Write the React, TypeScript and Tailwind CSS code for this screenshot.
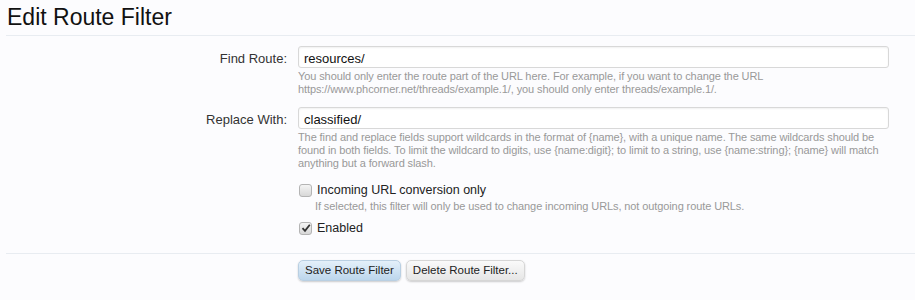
import React from "react";

const findHelp =
  "You should only enter the route part of the URL here. For example, if you want to change the URL\nhttps://www.phcorner.net/threads/example.1/, you should only enter threads/example.1/.";
const replaceHelp =
  "The find and replace fields support wildcards in the format of {name}, with a unique name. The same wildcards should be found in both fields. To limit the wildcard to digits, use {name:digit}; to limit to a string, use {name:string}; {name} will match anything but a forward slash.";

function Row(props: { label: string; value: string; help: string }) {
  return (
    <div className="flex">
      <div className="w-[292px] shrink-0 pt-[3px] pr-[11px] text-right text-[13px] text-[#333]">
        {props.label}
      </div>
      <div className="flex-1 pr-[26px]">
        <div className="h-[22px] rounded-[3px] border border-[#d8d8d8] bg-white px-[5px] pt-[2px] text-[13px] text-[#111] shadow-[inset_0_1px_2px_rgba(0,0,0,0.06)]">
          {props.value}
        </div>
        <p className="mt-[2px] whitespace-pre-line text-[11px] leading-[13px] tracking-[-0.1px] text-[#999]">
          {props.help}
        </p>
      </div>
    </div>
  );
}

function Box(props: { checked?: boolean }) {
  return (
    <span className="flex h-[13px] w-[13px] shrink-0 items-center justify-center rounded-[3px] border border-[#b4b4b4] bg-gradient-to-b from-[#f4f4f4] to-[#d8d8d8]">
      {props.checked && (
        <svg width="10" height="10" viewBox="0 0 10 10">
          <path d="M1.5 5.2 L4 7.8 L8.8 1.8" fill="none" stroke="#333" strokeWidth="1.8" />
        </svg>
      )}
    </span>
  );
}

export default function App() {
  return (
    <div
      className="min-h-[300px] w-[915px] bg-[#fcfcfe] pl-[6px]"
      style={{ fontFamily: '"Liberation Sans", Arial, sans-serif' }}
    >
      <h1 className="pl-[1px] pt-[5px] text-[23px] leading-[24px] text-[#111]">Edit Route Filter</h1>
      <div className="mt-[6px] border-t border-[#e8ecf1]" />

      <div className="mt-[10px] flex flex-col gap-[11px]">
        <Row label="Find Route:" value="resources/" help={findHelp} />
        <Row label="Replace With:" value="classified/" help={replaceHelp} />
      </div>

      <div className="ml-[293px] mt-[12px] flex flex-col">
        <div className="flex items-center gap-[5px] text-[12.5px] leading-[16px] text-[#222]">
          <Box />
          <span>Incoming URL conversion only</span>
        </div>
        <p className="ml-[16px] mt-[2px] text-[11px] leading-[13px] tracking-[-0.1px] text-[#999]">
          If selected, this filter will only be used to change incoming URLs, not outgoing route URLs.
        </p>
        <div className="mt-[7px] flex items-center gap-[5px] text-[12.5px] leading-[16px] text-[#222]">
          <Box checked />
          <span>Enabled</span>
        </div>
      </div>

      <div className="mt-[17px] border-t border-[#e8ecf1]" />
      <div className="ml-[292px] mt-[6px] flex gap-[5px]">
        <button className="h-[21px] rounded-[5px] border border-[#b9cfe2] bg-gradient-to-b from-[#e4f0fa] to-[#bcd6ec] px-[6px] text-[11.5px] text-[#222] shadow-[0_1px_2px_rgba(0,0,0,0.2)]">
          Save Route Filter
        </button>
        <button className="h-[21px] rounded-[5px] border border-[#d6d6d6] bg-gradient-to-b from-[#fafafa] to-[#e6e6e6] px-[6px] text-[11.5px] text-[#222] shadow-[0_1px_2px_rgba(0,0,0,0.2)]">
          Delete Route Filter...
        </button>
      </div>
    </div>
  );
}
